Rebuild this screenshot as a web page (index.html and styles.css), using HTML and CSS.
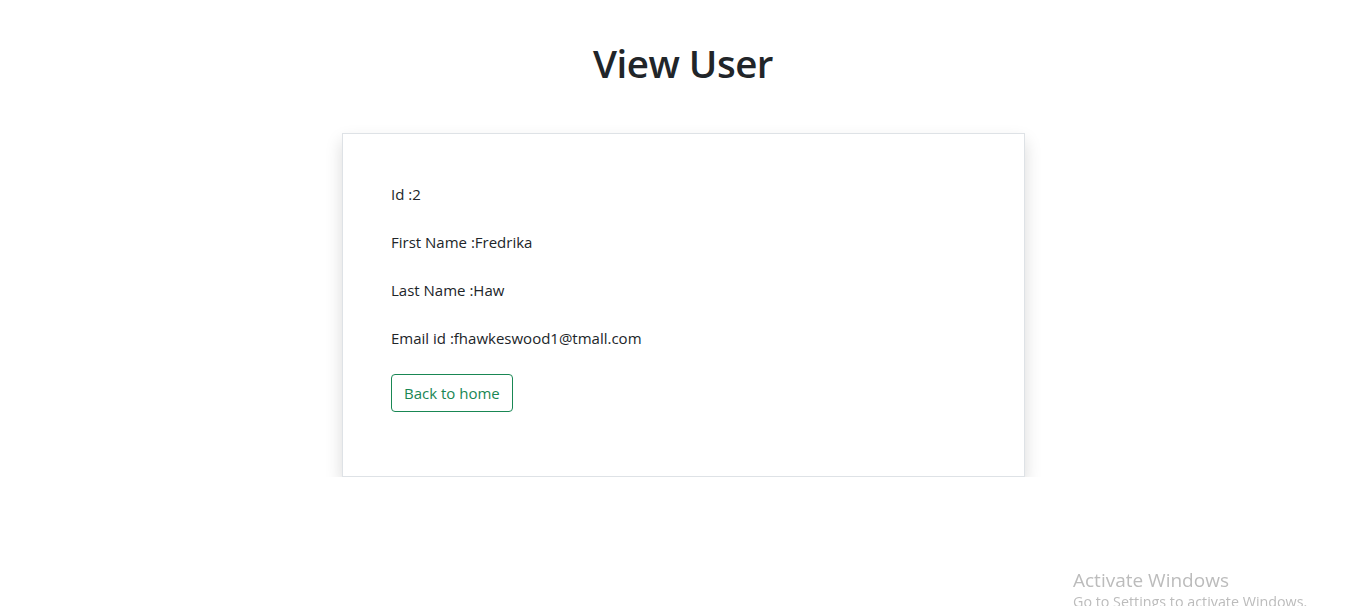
FILE: index.html
```html
<!DOCTYPE html>
<html lang="en">
<head>
<meta charset="utf-8">
<title>View User</title>
<link rel="stylesheet" href="styles.css">
</head>
<body>
<div class="page">
  <h1 class="title">View User</h1>
  <div class="card">
    <p class="field">Id :2</p>
    <p class="field">First Name :Fredrika</p>
    <p class="field">Last Name :Haw</p>
    <p class="field">Email id :fhawkeswood1@tmall.com</p>
    <div class="actions"><a class="btn" href="#">Back to home</a></div>
  </div>
</div>
<div class="watermark">
  <div class="wm-title">Activate Windows</div>
  <div class="wm-sub">Go to Settings to activate Windows.</div>
</div>
</body>
</html>
```
FILE: styles.css
```css
html, body {
  margin: 0;
  padding: 0;
  background: #fff;
  color: #212529;
  font-family: "Open Sans", "Noto Sans", "Liberation Sans", sans-serif;
  font-size: 16px;
  line-height: 1.5;
  overflow: hidden;
}
.page {
  display: flex;
  flex-direction: column;
  align-items: center;
  padding-top: 39px;
}
.title {
  margin: 0 0 46px 0;
  font-size: 38.5px;
  line-height: 48px;
  font-weight: 600;
  letter-spacing: -0.5px;
  text-align: center;
}
.card {
  box-sizing: border-box;
  width: 683px;
  margin-left: 1px;
  padding: 48px 48px 64px 48px;
  border: 1px solid #dee2e6;
  box-shadow: 0 8px 16px rgba(0, 0, 0, 0.15);
  background: #fff;
}
.field {
  margin: 0 0 24px 0;
  font-size: 15px;
  line-height: 24px;
}
.actions {
  display: flex;
}
.btn {
  display: inline-block;
  padding: 6px 12px;
  border: 1px solid #198754;
  border-radius: 4px;
  color: #198754;
  text-decoration: none;
  font-size: 15px;
  line-height: 24px;
}
.watermark {
  position: fixed;
  left: 1073px;
  top: 567px;
  color: #bcbcbc;
  font-family: "Open Sans", "Noto Sans", sans-serif;
  white-space: nowrap;
}
.wm-title {
  font-size: 19px;
  line-height: 26px;
}
.wm-sub {
  font-size: 14.3px;
  line-height: 18px;
}
```
